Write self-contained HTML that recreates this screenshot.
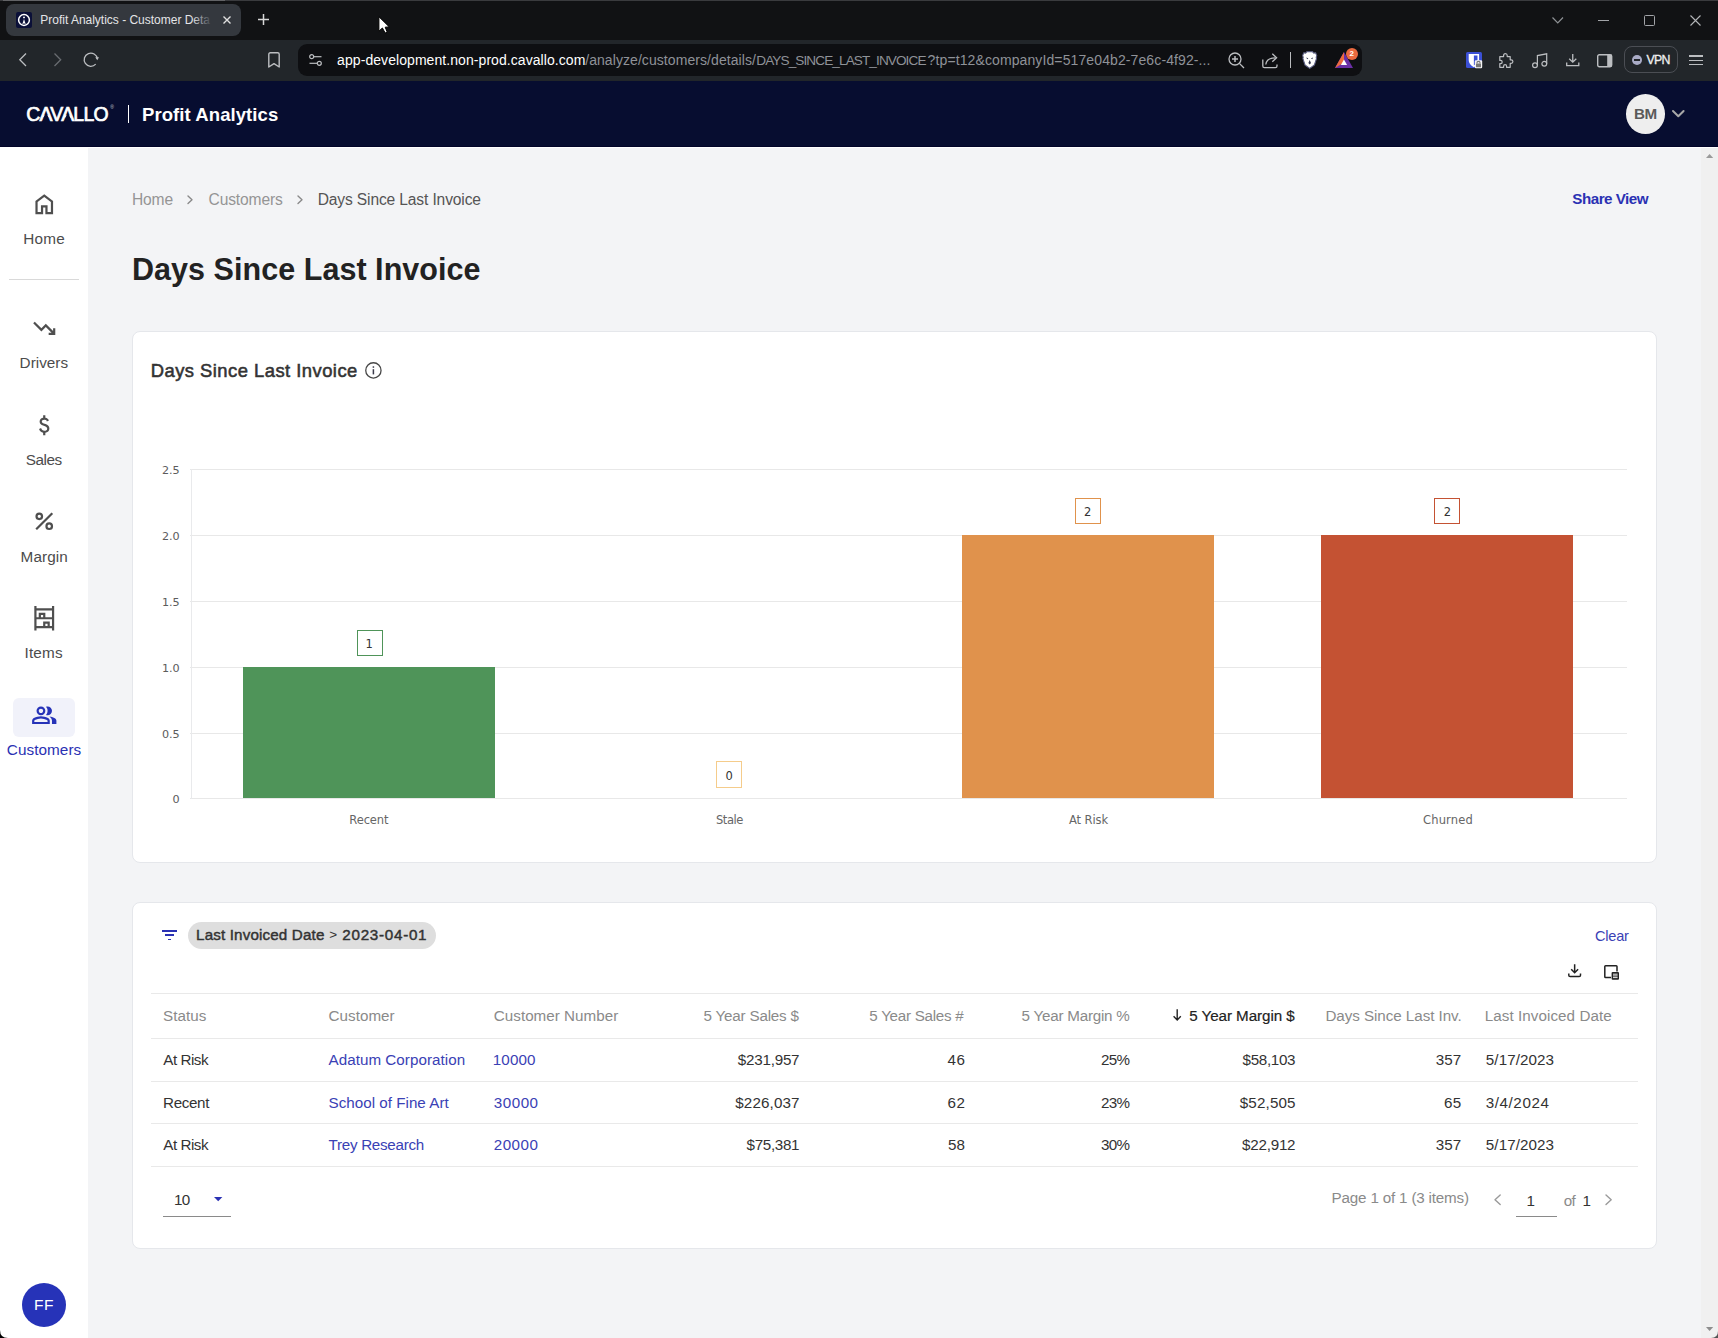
<!DOCTYPE html>
<html lang="en"><head><meta charset="utf-8"><title>Profit Analytics - Customer Details</title>
<style>
html,body{margin:0;padding:0}
body{width:1718px;height:1338px;position:relative;overflow:hidden;background:#f3f4f6;font-family:"Liberation Sans",sans-serif}
.t{position:absolute;white-space:pre;margin:0;padding:0}
.b{position:absolute;box-sizing:border-box}
svg{position:absolute;overflow:visible}
</style></head><body>
<div class="b" style="left:0px;top:0px;width:1718px;height:40px;background:#111214;"></div>
<div class="b" style="left:0px;top:0px;width:1718px;height:1px;background:#3a3b3e;"></div>
<div class="b" style="left:3px;top:0px;width:222px;height:1px;background:#626366;"></div>
<div class="b" style="left:0px;top:40px;width:1718px;height:41px;background:#22262a;"></div>
<div class="b" style="left:6px;top:4px;width:235px;height:32px;background:#34383e;border-radius:8px;"></div>
<div class="b" style="left:298px;top:44px;width:1064px;height:32px;background:#0e0f12;border-radius:9px;"></div>
<div class="b" style="left:0px;top:81px;width:1718px;height:66px;background:#070d30;"></div>
<div class="b" style="left:0px;top:146px;width:1718px;height:1px;background:#020428;"></div>
<div class="b" style="left:88px;top:147px;width:1630px;height:1px;background:#ffffff;z-index:1;"></div>
<div class="b" style="left:128px;top:105px;width:1px;height:18px;background:#ffffff;"></div>
<div class="b" style="left:1625.7px;top:94px;width:39.4px;height:40px;background:#eeeeee;border-radius:50%;"></div>
<div class="b" style="left:0px;top:147px;width:88px;height:1191px;background:#ffffff;"></div>
<div class="b" style="left:9px;top:279px;width:70px;height:1px;background:#d9d9d9;"></div>
<div class="b" style="left:13px;top:698px;width:62px;height:39px;background:#f1f2fa;border-radius:6px;"></div>
<div class="b" style="left:22px;top:1283px;width:44px;height:44px;background:#2633b8;border-radius:50%;"></div>
<div class="b" style="left:1701px;top:147px;width:17px;height:1191px;background:#f0f0f0;"></div>
<div class="b" style="left:132px;top:331px;width:1525px;height:532px;background:#ffffff;border:1px solid #e5e7eb;border-radius:8px;"></div>
<div class="b" style="left:132px;top:902px;width:1525px;height:347px;background:#ffffff;border:1px solid #e5e7eb;border-radius:8px;"></div>
<div class="b" style="left:190px;top:469px;width:1437px;height:1px;background:#e8e8e8;"></div>
<div class="b" style="left:190px;top:535px;width:1437px;height:1px;background:#e8e8e8;"></div>
<div class="b" style="left:190px;top:601px;width:1437px;height:1px;background:#e8e8e8;"></div>
<div class="b" style="left:190px;top:667px;width:1437px;height:1px;background:#e8e8e8;"></div>
<div class="b" style="left:190px;top:733px;width:1437px;height:1px;background:#e8e8e8;"></div>
<div class="b" style="left:190px;top:798px;width:1437px;height:1px;background:#e8e8e8;"></div>
<div class="b" style="left:190.5px;top:469px;width:1px;height:330px;background:#e9eaec;"></div>
<div class="b" style="left:243.3px;top:666.8px;width:252.1px;height:130.9px;background:#4f9459;"></div>
<div class="b" style="left:961.7px;top:534.7px;width:252px;height:263px;background:#e0924c;"></div>
<div class="b" style="left:1321.4px;top:534.7px;width:251.9px;height:263px;background:#c45233;"></div>
<div class="b" style="left:356.6px;top:629.6px;width:26px;height:26.5px;background:#ffffff;border:1px solid #4f9459;"></div>
<div class="b" style="left:716px;top:761.3px;width:26px;height:26.5px;background:#ffffff;border:1px solid #f5cc8b;"></div>
<div class="b" style="left:1074.6px;top:497.5px;width:26px;height:26.5px;background:#ffffff;border:1px solid #e0924c;"></div>
<div class="b" style="left:1434.3px;top:497.5px;width:26px;height:26.5px;background:#ffffff;border:1px solid #c45233;"></div>
<div class="b" style="left:151px;top:993px;width:1487px;height:1px;background:#e9e9e9;"></div>
<div class="b" style="left:151px;top:1038px;width:1487px;height:1px;background:#e9e9e9;"></div>
<div class="b" style="left:151px;top:1081px;width:1487px;height:1px;background:#e9e9e9;"></div>
<div class="b" style="left:151px;top:1123px;width:1487px;height:1px;background:#e9e9e9;"></div>
<div class="b" style="left:151px;top:1166px;width:1487px;height:1px;background:#e9e9e9;"></div>
<div class="b" style="left:188px;top:922px;width:248px;height:27px;background:#dedede;border-radius:14px;"></div>
<div class="b" style="left:163px;top:1216px;width:68px;height:1px;background:#8a8a8a;"></div>
<div class="b" style="left:1516px;top:1216px;width:41px;height:1px;background:#8a8a8a;"></div>
<svg style="left:30.75px;top:190.7px;" width="26.5" height="26.5" viewBox="0 0 24 24"><path d="M6 19h3v-6h6v6h3v-9l-6-4.5L6 10v9Zm-2 2V9l8-6 8 6v12h-7v-6h-2v6H4Z" fill="#4f4f4f"/></svg>
<svg style="left:30.75px;top:315px;" width="26.5" height="26.5" viewBox="0 0 24 24"><path d="M16 18v-2h2.6l-5.2-5.15-4 4L2 7.4 3.4 6l6 6 4-4 6.6 6.6V12h2v6h-6Z" fill="#4f4f4f"/></svg>
<svg style="left:30.75px;top:411.6px;" width="26.5" height="26.5" viewBox="0 0 24 24"><path d="M11 21v-2.15q-1.325-.3-2.287-1.15Q7.75 16.85 7.3 15.3l1.85-.75q.375 1.2 1.113 1.825.737.625 1.937.625 1.025 0 1.738-.463.712-.462.712-1.437 0-.875-.55-1.388-.55-.512-2.55-1.162-2.15-.675-2.95-1.612-.8-.938-.8-2.288 0-1.625 1.05-2.525Q9.9 5.225 11 5.1V3h2v2.1q1.25.2 2.063.912.812.713 1.187 1.738l-1.85.8q-.3-.8-.85-1.2-.55-.4-1.5-.4-1.1 0-1.675.487-.575.488-.575 1.213 0 .825.75 1.3.75.475 2.6 1 1.725.5 2.612 1.587.888 1.088.888 2.513 0 1.775-1.05 2.7-1.05.925-2.6 1.15V21h-2Z" fill="#4f4f4f"/></svg>
<svg style="left:30.75px;top:508.1px;" width="26.5" height="26.5" viewBox="0 0 24 24"><g fill="none" stroke="#4f4f4f" stroke-width="2"><circle cx="7.5" cy="7.5" r="2.5"/><circle cx="16.5" cy="16.5" r="2.5"/><path d="M4.7 19.3L19.3 4.7"/></g></svg>
<svg style="left:30.75px;top:604.7px;" width="26.5" height="26.5" viewBox="0 0 24 24"><path d="M3 23V1h2v2h14V1h2v22h-2v-2H5v2H3Zm2-12h2V7h6v4h6V5H5v6Zm0 8h6v-4h6v4h2v-6H5v6Zm4-8h2V9H9v2Zm4 8h2v-2h-2v2Z" fill="#4f4f4f"/></svg>
<svg style="left:30.75px;top:701.6px;" width="26.5" height="26.5" viewBox="0 0 24 24"><path d="M1 20v-2.8q0-.85.438-1.563.437-.712 1.162-1.087 1.55-.775 3.15-1.163Q7.35 13 9 13t3.25.387q1.6.388 3.15 1.163.725.375 1.162 1.087Q17 16.35 17 17.2V20H1Zm18 0v-3q0-1.1-.612-2.113-.613-1.012-1.738-1.737 1.275.15 2.4.512 1.125.363 2.1.888.9.5 1.375 1.112Q23 16.275 23 17v3h-4ZM9 12q-1.65 0-2.825-1.175Q5 9.65 5 8q0-1.65 1.175-2.825Q7.35 4 9 4q1.65 0 2.825 1.175Q13 6.35 13 8q0 1.65-1.175 2.825Q10.65 12 9 12Zm10-4q0 1.65-1.175 2.825Q16.65 12 15 12q-.275 0-.7-.063-.425-.062-.7-.137.675-.8 1.037-1.775Q15 9.05 15 8q0-1.05-.363-2.025Q14.275 5 13.6 4.2q.35-.125.7-.163Q14.65 4 15 4q1.65 0 2.825 1.175Q19 6.35 19 8ZM3 18h12v-.8q0-.275-.137-.5-.138-.225-.363-.35-1.35-.675-2.725-1.013Q10.4 15 9 15t-2.775.337Q4.85 15.675 3.5 16.35q-.225.125-.362.35-.138.225-.138.5v.8Zm6-8q.825 0 1.413-.588Q11 8.825 11 8t-.587-1.413Q9.825 6 9 6q-.825 0-1.412.587Q7 7.175 7 8q0 .825.588 1.412Q8.175 10 9 10Z" fill="#2633b8"/></svg>
<svg style="left:188.3px;top:196.2px;" width="4" height="7.6" viewBox="0 0 4 7.6"><path d="M0 0L4 3.8L0 7.6" fill="none" stroke="#8a8a8a" stroke-width="1.4" stroke-linecap="round" stroke-linejoin="round"/></svg>
<svg style="left:297.8px;top:196.2px;" width="4" height="7.6" viewBox="0 0 4 7.6"><path d="M0 0L4 3.8L0 7.6" fill="none" stroke="#8a8a8a" stroke-width="1.4" stroke-linecap="round" stroke-linejoin="round"/></svg>
<svg style="left:1672.4px;top:110.4px;" width="12.6" height="7.6" viewBox="0 0 12.6 7.6"><path d="M1 1L6.3 6.3L11.6 1" fill="none" stroke="#a8a8a8" stroke-width="2" stroke-linecap="round" stroke-linejoin="round"/></svg>
<svg style="left:365px;top:361.65px;" width="16.8" height="16.8" viewBox="0 0 16.8 16.8"><circle cx="8.4" cy="8.4" r="7.65" fill="none" stroke="#484848" stroke-width="1.3"/><rect x="7.65" y="7.2" width="1.5" height="5.2" fill="#3a3a4a"/><rect x="7.65" y="4.3" width="1.5" height="1.5" fill="#3a3a4a"/></svg>
<div class="b" style="left:162px;top:930.3px;width:15px;height:1.7px;background:#2a31b3;"></div>
<div class="b" style="left:164.8px;top:934.4px;width:9.4px;height:1.7px;background:#2a31b3;"></div>
<div class="b" style="left:167.8px;top:938.5px;width:3.4px;height:1.7px;background:#2a31b3;"></div>
<svg style="left:1567.6px;top:964.4px;" width="14" height="14" viewBox="0 0 14 14"><g fill="none" stroke="#222" stroke-width="1.5"><path d="M6.65 0.2V8.6M3.2 5.3L6.65 8.8L10.1 5.3"/><path d="M0.8 9.6V11.3Q0.8 12.6 2.1 12.6H11.2Q12.5 12.6 12.5 11.3V9.6"/></g></svg>
<svg style="left:1604.4px;top:965px;" width="16" height="15" viewBox="0 0 16 15"><g fill="none" stroke="#222" stroke-width="1.5"><path d="M7 12.6H1.6Q0.8 12.6 0.8 11.8V1.6Q0.8 0.8 1.6 0.8H12.2Q13 0.8 13 1.6V6.5"/></g><rect x="7.6" y="6.9" width="7.4" height="7.9" rx="1.1" fill="#222"/><path d="M9 9.2h4.6M9 10.9h4.6M9 12.6h4.6" stroke="#fff" stroke-width="0.9"/></svg>
<svg style="left:1172.9px;top:1008.8px;" width="8.4" height="11.8" viewBox="0 0 8.4 11.8"><path d="M4.2 0.3V10.8M0.6 7.3L4.2 11L7.8 7.3" fill="none" stroke="#222" stroke-width="1.4"/></svg>
<svg style="left:214px;top:1197px;" width="8.4" height="4.2" viewBox="0 0 8.4 4.2"><path d="M0 0H8.4L4.2 4.2Z" fill="#2a31b3"/></svg>
<svg style="left:1494.6px;top:1195px;" width="5.2" height="9.6" viewBox="0 0 5.2 9.6"><path d="M5.2 0L0 4.8L5.2 9.6" fill="none" stroke="#9a9a9a" stroke-width="1.4" stroke-linecap="round" stroke-linejoin="round"/></svg>
<svg style="left:1606.2px;top:1195px;" width="5.2" height="9.6" viewBox="0 0 5.2 9.6"><path d="M0 0L5.2 4.8L0 9.6" fill="none" stroke="#9a9a9a" stroke-width="1.4" stroke-linecap="round" stroke-linejoin="round"/></svg>
<svg style="left:1706px;top:154px;" width="7.2" height="4" viewBox="0 0 7.2 4"><path d="M0 4H7.2L3.6 0Z" fill="#9a9a9a"/></svg>
<svg style="left:1705.9px;top:1327px;" width="7.2" height="4" viewBox="0 0 7.2 4"><path d="M0 0H7.2L3.6 4Z" fill="#8e8e8e"/></svg>
<svg style="left:1711px;top:1331px;" width="7" height="7" viewBox="0 0 7 7"><path d="M7 0Q7 7 0 7H7Z" fill="#555"/></svg>
<div class="b" style="left:16px;top:12px;width:16px;height:16px;background:#0b1038;border-radius:2px;"></div>
<svg style="left:16px;top:12px;" width="16" height="16" viewBox="0 0 16 16"><circle cx="8" cy="8" r="5.4" fill="none" stroke="#fff" stroke-width="1.5"/><circle cx="8" cy="5.4" r="0.95" fill="#fff"/><path d="M8 7.1L9.7 12.2L8 11.2L6.3 12.2Z" fill="#fff"/></svg>
<div class="b" style="left:192px;top:8px;width:24px;height:24px;z-index:3;background:linear-gradient(90deg,rgba(52,56,62,0),#34383e 85%);"></div>
<svg style="left:223px;top:16px;" width="8" height="8" viewBox="0 0 8 8"><path d="M0.5 0.5L7.5 7.5M7.5 0.5L0.5 7.5" stroke="#e0e0e0" stroke-width="1.4"/></svg>
<svg style="left:258px;top:14.3px;" width="11" height="11" viewBox="0 0 11 11"><path d="M5.5 0V11M0 5.5H11" stroke="#d8d8d8" stroke-width="1.5"/></svg>
<svg style="left:378px;top:16px;z-index:5;" width="13" height="19" viewBox="0 0 13 19"><path d="M0.9 0.7L0.9 15.2L4.4 12L7.2 17L9.3 16.3L7.2 11.2L11.3 10.9Z" fill="#fff" stroke="#000" stroke-width="1" stroke-linejoin="round"/></svg>
<svg style="left:1551.7px;top:16.5px;" width="11.5" height="6.5" viewBox="0 0 11.5 6.5"><path d="M0.5 0.5L5.75 5.8L11 0.5" fill="none" stroke="#8f9296" stroke-width="1.2"/></svg>
<div class="b" style="left:1598px;top:19.5px;width:10.5px;height:1px;background:#a2a4a8;"></div>
<div class="b" style="left:1644px;top:15px;width:10.5px;height:10.5px;border:1px solid #a2a4a8;border-radius:1.5px;"></div>
<svg style="left:1689.5px;top:14.5px;" width="11" height="11" viewBox="0 0 11 11"><path d="M0.5 0.5L10.5 10.5M10.5 0.5L0.5 10.5" stroke="#b4b6b9" stroke-width="1.1"/></svg>
<svg style="left:19px;top:52.7px;" width="7.5" height="13.5" viewBox="0 0 7.5 13.5"><path d="M7 0.5L0.8 6.75L7 13" fill="none" stroke="#bcbec1" stroke-width="1.3"/></svg>
<svg style="left:53.6px;top:52.7px;" width="7.5" height="13.5" viewBox="0 0 7.5 13.5"><path d="M0.5 0.5L6.7 6.75L0.5 13" fill="none" stroke="#696c71" stroke-width="1.3"/></svg>
<svg style="left:83px;top:52px;" width="16" height="16" viewBox="0 0 16 16"><path d="M14.34 6.78A6.6 6.6 0 1 0 12.7 12.12" fill="none" stroke="#bcbec1" stroke-width="1.3"/><path d="M12.3 5.2H16L14.3 8.2Z" fill="#bcbec1"/></svg>
<svg style="left:268.4px;top:52.3px;" width="12" height="16" viewBox="0 0 12 16"><path d="M0.8 15V2.3Q0.8 0.8 2.3 0.8H9.7Q11.2 0.8 11.2 2.3V15L6 11.6Z" fill="none" stroke="#bcbec1" stroke-width="1.4" stroke-linejoin="round"/></svg>
<svg style="left:309.3px;top:54px;" width="13" height="12" viewBox="0 0 13 12"><g fill="none" stroke="#bcbec1" stroke-width="1.2"><circle cx="2.7" cy="2.7" r="2"/><path d="M5 2.7H12.5"/><circle cx="10.3" cy="9.3" r="2"/><path d="M0.5 9.3H8"/></g></svg>
<svg style="left:1227.5px;top:52.3px;" width="17" height="17" viewBox="0 0 17 17"><g fill="none" stroke="#bcbec1" stroke-width="1.3"><circle cx="7" cy="7" r="6"/><path d="M11.4 11.4L16 16"/><path d="M7 4V10M4 7H10" stroke-width="1.5"/></g></svg>
<svg style="left:1262px;top:52.5px;" width="16" height="15.5" viewBox="0 0 16 15.5"><g fill="none" stroke="#bcbec1" stroke-width="1.3"><path d="M0.8 6.5V13Q0.8 14.6 2.4 14.6H13.4Q15 14.6 15 13V11.5"/><path d="M3.8 11.5Q4.6 4.8 13.6 4.8"/><path d="M10.3 0.8L14.6 4.8L10.3 8.8"/></g></svg>
<div class="b" style="left:1290px;top:52px;width:1px;height:16px;background:#b9bbbe;"></div>
<svg style="left:1302px;top:51px;" width="15.4" height="18" viewBox="0 0 15.4 18"><path d="M7.7 0.6L10.4 0.6L11.8 2.1L13.6 1.7L14.8 4.6L14.2 6.2L14.5 7.6L12.4 14L7.7 17.4L3 14L0.9 7.6L1.2 6.2L0.6 4.6L1.8 1.7L3.6 2.1L5 0.6Z" fill="#fff" stroke="#5a5d80" stroke-width="1.1" stroke-linejoin="round"/><path d="M4.2 6.4L6.4 7.2L5.2 8.3ZM11.2 6.4L9 7.2L10.2 8.3ZM7.7 9L9 12L7.7 13.4L6.4 12Z" fill="#33364f"/></svg>
<svg style="left:1335px;top:52px;" width="18" height="16" viewBox="0 0 18 16"><path d="M9 0L18 16H0Z" fill="#6a2fa5"/><path d="M9 0L0 16L9 10.6Z" fill="#ee6a3c"/><path d="M9 7.4L12.1 12.9H5.9Z" fill="#fff"/></svg>
<div class="b" style="left:1346px;top:48px;width:12px;height:12px;background:#ea6a40;border-radius:50%;"></div>
<div class="b" style="left:1466px;top:51.9px;width:16.2px;height:16.2px;background:#3b50d6;border-radius:1.5px;"></div>
<svg style="left:1466px;top:51.9px;" width="16.2" height="16.2" viewBox="0 0 16.2 16.2"><path d="M2.7 2H13.1V8Q13.1 12.6 7.9 15.2Q2.7 12.6 2.7 8Z" fill="#fff"/><path d="M7.9 3.6H11.5V8Q11.5 11.4 7.9 13.4Z" fill="#3b50d6"/><rect x="8.8" y="8.3" width="7.4" height="7.9" rx="1.2" fill="#f4f4f4"/><rect x="10" y="11.4" width="5" height="3.8" rx="0.5" fill="#777"/><path d="M11 11.4V10.5Q11 9.4 12.5 9.4Q14 9.4 14 10.5V11.4" fill="none" stroke="#777" stroke-width="1.1"/></svg>
<svg style="left:1498px;top:53px;" width="15.5" height="15" viewBox="0 0 15.5 15"><path d="M5.6 2.6Q5.6 0.7 7.4 0.7Q9.2 0.7 9.2 2.6V3.6H12.2V6.8H13.1Q14.9 6.8 14.9 8.6Q14.9 10.4 13.1 10.4H12.2V14.3H8.6V13.3Q8.6 11.7 7.1 11.7Q5.6 11.7 5.6 13.3V14.3H1.8V10.6H2.6Q4.2 10.6 4.2 9Q4.2 7.4 2.6 7.4H1.8V3.6H5.6Z" fill="none" stroke="#bcbec1" stroke-width="1.2" stroke-linejoin="round"/></svg>
<svg style="left:1531.5px;top:53px;" width="15.5" height="15.5" viewBox="0 0 15.5 15.5"><g fill="none" stroke="#bcbec1" stroke-width="1.2"><circle cx="3" cy="12.3" r="2.4"/><circle cx="12.3" cy="10.8" r="2.4"/><path d="M5.4 12.3V2.6L14.7 0.8V10.8"/></g></svg>
<svg style="left:1565.5px;top:54px;" width="13.5" height="12.5" viewBox="0 0 13.5 12.5"><g fill="none" stroke="#bcbec1" stroke-width="1.3"><path d="M6.75 0V8M3.2 4.8L6.75 8.2L10.3 4.8"/><path d="M0.7 8.6V11.6H12.8V8.6"/></g></svg>
<svg style="left:1597.4px;top:53.5px;" width="15.4" height="13.4" viewBox="0 0 15.4 13.4"><rect x="0.7" y="0.7" width="14" height="12" rx="1.6" fill="none" stroke="#bcbec1" stroke-width="1.4"/><rect x="10.2" y="0.7" width="4.5" height="12" fill="#bcbec1"/></svg>
<div class="b" style="left:1624.3px;top:46.2px;width:53.4px;height:27.2px;border:1px solid #4b4e54;border-radius:8px;"></div>
<div class="b" style="left:1632px;top:55px;width:10px;height:10px;background:#a9abc6;border-radius:50%;"></div>
<div class="b" style="left:1634.2px;top:59.2px;width:5.6px;height:1.6px;background:#22262a;"></div>
<div class="b" style="left:1689.3px;top:55.3px;width:13.4px;height:1.3px;background:#bcbec1;"></div>
<div class="b" style="left:1689.3px;top:59.7px;width:13.4px;height:1.3px;background:#bcbec1;"></div>
<div class="b" style="left:1689.3px;top:64.1px;width:13.4px;height:1.3px;background:#bcbec1;"></div>
<svg style="left:0px;top:1330px;" width="8" height="8" viewBox="0 0 8 8"><path d="M0 0Q0 8 8 8H0Z" fill="#000"/></svg>
<svg style="left:0;top:0;z-index:4" width="120" height="130" viewBox="0 0 120 130"><path d="M44.75 114.9L47.25 114.9L48.8 118.1L43.2 118.1Z M66.75 114.9L69.1 114.9L70.3 118.1L65.2 118.1Z" fill="#070d30"/></svg>
<div class="t" style="left:26.30px;top:104.98px;font:400 19.4px/19.4px 'Liberation Sans',sans-serif;color:#fff;letter-spacing:-0.715px;-webkit-text-stroke:0.7px #fff;">CAVALLO</div>
<div class="t" style="left:110.20px;top:105.37px;font:400 5px/5px 'Liberation Sans',sans-serif;color:#c8cad6;">®</div>
<div class="t" style="left:142.00px;top:105.84px;font:700 18.5px/18.5px 'Liberation Sans',sans-serif;color:#fff;letter-spacing:0.079px;">Profit Analytics</div>
<div class="t" style="left:1633.90px;top:105.93px;font:700 15.2px/15.2px 'Liberation Sans',sans-serif;color:#5a5a5a;letter-spacing:-0.368px;">BM</div>
<div class="t" style="left:23.30px;top:230.80px;font:400 15.3px/15.3px 'Liberation Sans',sans-serif;color:#4c4c4c;letter-spacing:0.201px;">Home</div>
<div class="t" style="left:19.60px;top:355.05px;font:400 15.3px/15.3px 'Liberation Sans',sans-serif;color:#4c4c4c;">Drivers</div>
<div class="t" style="left:25.80px;top:452.05px;font:400 15.3px/15.3px 'Liberation Sans',sans-serif;color:#4c4c4c;letter-spacing:-0.454px;">Sales</div>
<div class="t" style="left:20.60px;top:549.25px;font:400 15.3px/15.3px 'Liberation Sans',sans-serif;color:#4c4c4c;letter-spacing:0.070px;">Margin</div>
<div class="t" style="left:24.60px;top:645.05px;font:400 15.3px/15.3px 'Liberation Sans',sans-serif;color:#4c4c4c;letter-spacing:0.138px;">Items</div>
<div class="t" style="left:6.80px;top:742.05px;font:400 15.3px/15.3px 'Liberation Sans',sans-serif;color:#2a31b3;letter-spacing:0.062px;">Customers</div>
<div class="t" style="left:33.90px;top:1296.88px;font:400 15.5px/15.5px 'Liberation Sans',sans-serif;color:#fff;letter-spacing:0.632px;">FF</div>
<div class="t" style="left:132.00px;top:192.49px;font:400 15.6px/15.6px 'Liberation Sans',sans-serif;color:#959595;letter-spacing:-0.175px;">Home</div>
<div class="t" style="left:208.50px;top:192.49px;font:400 15.6px/15.6px 'Liberation Sans',sans-serif;color:#959595;letter-spacing:-0.136px;">Customers</div>
<div class="t" style="left:317.70px;top:192.49px;font:400 15.6px/15.6px 'Liberation Sans',sans-serif;color:#555;letter-spacing:-0.143px;">Days Since Last Invoice</div>
<div class="t" style="left:1572.30px;top:190.93px;font:700 15.2px/15.2px 'Liberation Sans',sans-serif;color:#2a31b3;letter-spacing:-0.506px;">Share View</div>
<div class="t" style="left:132.00px;top:254.18px;font:700 30.5px/30.5px 'Liberation Sans',sans-serif;color:#222;letter-spacing:0.043px;">Days Since Last Invoice</div>
<div class="t" style="left:150.70px;top:362.22px;font:400 18.4px/18.4px 'Liberation Sans',sans-serif;color:#333;letter-spacing:0.471px;-webkit-text-stroke:0.55px #333;">Days Since Last Invoice</div>
<div class="t" style="left:161.93px;top:464.72px;font:400 11.2px/11.2px 'DejaVu Sans',sans-serif;color:#5c5c5c;">2.5</div>
<div class="t" style="left:161.93px;top:530.72px;font:400 11.2px/11.2px 'DejaVu Sans',sans-serif;color:#5c5c5c;">2.0</div>
<div class="t" style="left:161.93px;top:596.72px;font:400 11.2px/11.2px 'DejaVu Sans',sans-serif;color:#5c5c5c;">1.5</div>
<div class="t" style="left:161.93px;top:662.72px;font:400 11.2px/11.2px 'DejaVu Sans',sans-serif;color:#5c5c5c;">1.0</div>
<div class="t" style="left:161.93px;top:728.72px;font:400 11.2px/11.2px 'DejaVu Sans',sans-serif;color:#5c5c5c;">0.5</div>
<div class="t" style="left:172.60px;top:793.72px;font:400 11.2px/11.2px 'DejaVu Sans',sans-serif;color:#5c5c5c;">0</div>
<div class="t" style="left:349.30px;top:815.07px;font:400 11.5px/11.5px 'DejaVu Sans',sans-serif;color:#666;letter-spacing:-0.107px;">Recent</div>
<div class="t" style="left:716.00px;top:815.07px;font:400 11.5px/11.5px 'DejaVu Sans',sans-serif;color:#666;letter-spacing:-0.463px;">Stale</div>
<div class="t" style="left:1069.00px;top:815.07px;font:400 11.5px/11.5px 'DejaVu Sans',sans-serif;color:#666;letter-spacing:-0.084px;">At Risk</div>
<div class="t" style="left:1423.00px;top:815.07px;font:400 11.5px/11.5px 'DejaVu Sans',sans-serif;color:#666;letter-spacing:0.167px;">Churned</div>
<div class="t" style="left:365.60px;top:639.27px;font:400 11.5px/11.5px 'DejaVu Sans',sans-serif;color:#333;">1</div>
<div class="t" style="left:725.50px;top:771.07px;font:400 11.5px/11.5px 'DejaVu Sans',sans-serif;color:#333;">0</div>
<div class="t" style="left:1084.10px;top:507.07px;font:400 11.5px/11.5px 'DejaVu Sans',sans-serif;color:#333;">2</div>
<div class="t" style="left:1443.80px;top:507.07px;font:400 11.5px/11.5px 'DejaVu Sans',sans-serif;color:#333;">2</div>
<div class="t" style="left:196.10px;top:926.93px;font:400 15.2px/15.2px 'Liberation Sans',sans-serif;color:#333;letter-spacing:0.144px;-webkit-text-stroke:0.45px #333;">Last Invoiced Date</div>
<div class="t" style="left:329.20px;top:928.37px;font:400 13.5px/13.5px 'Liberation Sans',sans-serif;color:#333;">&gt;</div>
<div class="t" style="left:342.30px;top:926.93px;font:400 15.2px/15.2px 'Liberation Sans',sans-serif;color:#333;letter-spacing:0.729px;-webkit-text-stroke:0.45px #333;">2023-04-01</div>
<div class="t" style="left:1594.90px;top:928.84px;font:400 14.6px/14.6px 'Liberation Sans',sans-serif;color:#3a41b5;letter-spacing:-0.204px;">Clear</div>
<div class="t" style="left:163.10px;top:1008.43px;font:400 15.2px/15.2px 'Liberation Sans',sans-serif;color:#8a8a8a;letter-spacing:0.048px;">Status</div>
<div class="t" style="left:328.50px;top:1008.43px;font:400 15.2px/15.2px 'Liberation Sans',sans-serif;color:#8a8a8a;letter-spacing:0.047px;">Customer</div>
<div class="t" style="left:493.80px;top:1008.43px;font:400 15.2px/15.2px 'Liberation Sans',sans-serif;color:#8a8a8a;letter-spacing:0.028px;">Customer Number</div>
<div class="t" style="left:703.50px;top:1008.43px;font:400 15.2px/15.2px 'Liberation Sans',sans-serif;color:#8a8a8a;letter-spacing:-0.191px;">5 Year Sales $</div>
<div class="t" style="left:869.30px;top:1008.43px;font:400 15.2px/15.2px 'Liberation Sans',sans-serif;color:#8a8a8a;letter-spacing:-0.268px;">5 Year Sales #</div>
<div class="t" style="left:1021.50px;top:1008.43px;font:400 15.2px/15.2px 'Liberation Sans',sans-serif;color:#8a8a8a;letter-spacing:-0.222px;">5 Year Margin %</div>
<div class="t" style="left:1189.20px;top:1008.43px;font:400 15.2px/15.2px 'Liberation Sans',sans-serif;color:#222;letter-spacing:-0.058px;-webkit-text-stroke:0.18px #222;">5 Year Margin $</div>
<div class="t" style="left:1325.40px;top:1008.43px;font:400 15.2px/15.2px 'Liberation Sans',sans-serif;color:#8a8a8a;letter-spacing:-0.052px;">Days Since Last Inv.</div>
<div class="t" style="left:1484.80px;top:1008.43px;font:400 15.2px/15.2px 'Liberation Sans',sans-serif;color:#8a8a8a;letter-spacing:0.062px;">Last Invoiced Date</div>
<div class="t" style="left:163.30px;top:1052.33px;font:400 15.2px/15.2px 'Liberation Sans',sans-serif;color:#333;letter-spacing:-0.467px;">At Risk</div>
<div class="t" style="left:328.50px;top:1052.33px;font:400 15.2px/15.2px 'Liberation Sans',sans-serif;color:#3a41b5;letter-spacing:0.043px;">Adatum Corporation</div>
<div class="t" style="left:492.80px;top:1052.33px;font:400 15.2px/15.2px 'Liberation Sans',sans-serif;color:#3a41b5;letter-spacing:0.103px;">10000</div>
<div class="t" style="left:737.80px;top:1052.33px;font:400 15.2px/15.2px 'Liberation Sans',sans-serif;color:#333;letter-spacing:-0.228px;">$231,957</div>
<div class="t" style="left:947.60px;top:1052.33px;font:400 15.2px/15.2px 'Liberation Sans',sans-serif;color:#333;letter-spacing:0.553px;">46</div>
<div class="t" style="left:1101.11px;top:1052.33px;font:400 15.2px/15.2px 'Liberation Sans',sans-serif;color:#333;letter-spacing:-0.700px;">25%</div>
<div class="t" style="left:1242.50px;top:1052.33px;font:400 15.2px/15.2px 'Liberation Sans',sans-serif;color:#333;letter-spacing:-0.309px;">$58,103</div>
<div class="t" style="left:1435.70px;top:1052.33px;font:400 15.2px/15.2px 'Liberation Sans',sans-serif;color:#333;letter-spacing:0.103px;">357</div>
<div class="t" style="left:1485.80px;top:1052.33px;font:400 15.2px/15.2px 'Liberation Sans',sans-serif;color:#333;letter-spacing:0.085px;">5/17/2023</div>
<div class="t" style="left:163.00px;top:1095.23px;font:400 15.2px/15.2px 'Liberation Sans',sans-serif;color:#333;letter-spacing:-0.340px;">Recent</div>
<div class="t" style="left:328.50px;top:1095.23px;font:400 15.2px/15.2px 'Liberation Sans',sans-serif;color:#3a41b5;letter-spacing:0.018px;">School of Fine Art</div>
<div class="t" style="left:493.80px;top:1095.23px;font:400 15.2px/15.2px 'Liberation Sans',sans-serif;color:#3a41b5;letter-spacing:0.503px;">30000</div>
<div class="t" style="left:735.30px;top:1095.23px;font:400 15.2px/15.2px 'Liberation Sans',sans-serif;color:#333;letter-spacing:0.129px;">$226,037</div>
<div class="t" style="left:947.60px;top:1095.23px;font:400 15.2px/15.2px 'Liberation Sans',sans-serif;color:#333;letter-spacing:0.553px;">62</div>
<div class="t" style="left:1101.11px;top:1095.23px;font:400 15.2px/15.2px 'Liberation Sans',sans-serif;color:#333;letter-spacing:-0.700px;">23%</div>
<div class="t" style="left:1239.70px;top:1095.23px;font:400 15.2px/15.2px 'Liberation Sans',sans-serif;color:#333;letter-spacing:0.158px;">$52,505</div>
<div class="t" style="left:1444.00px;top:1095.23px;font:400 15.2px/15.2px 'Liberation Sans',sans-serif;color:#333;letter-spacing:0.353px;">65</div>
<div class="t" style="left:1485.80px;top:1095.23px;font:400 15.2px/15.2px 'Liberation Sans',sans-serif;color:#333;letter-spacing:0.561px;">3/4/2024</div>
<div class="t" style="left:163.30px;top:1137.33px;font:400 15.2px/15.2px 'Liberation Sans',sans-serif;color:#333;letter-spacing:-0.467px;">At Risk</div>
<div class="t" style="left:328.50px;top:1137.33px;font:400 15.2px/15.2px 'Liberation Sans',sans-serif;color:#3a41b5;letter-spacing:-0.274px;">Trey Research</div>
<div class="t" style="left:493.80px;top:1137.33px;font:400 15.2px/15.2px 'Liberation Sans',sans-serif;color:#3a41b5;letter-spacing:0.453px;">20000</div>
<div class="t" style="left:746.60px;top:1137.33px;font:400 15.2px/15.2px 'Liberation Sans',sans-serif;color:#333;letter-spacing:-0.325px;">$75,381</div>
<div class="t" style="left:948.00px;top:1137.33px;font:400 15.2px/15.2px 'Liberation Sans',sans-serif;color:#333;letter-spacing:0.153px;">58</div>
<div class="t" style="left:1101.11px;top:1137.33px;font:400 15.2px/15.2px 'Liberation Sans',sans-serif;color:#333;letter-spacing:-0.700px;">30%</div>
<div class="t" style="left:1242.00px;top:1137.33px;font:400 15.2px/15.2px 'Liberation Sans',sans-serif;color:#333;letter-spacing:-0.225px;">$22,912</div>
<div class="t" style="left:1435.70px;top:1137.33px;font:400 15.2px/15.2px 'Liberation Sans',sans-serif;color:#333;letter-spacing:0.103px;">357</div>
<div class="t" style="left:1485.80px;top:1137.33px;font:400 15.2px/15.2px 'Liberation Sans',sans-serif;color:#333;letter-spacing:0.085px;">5/17/2023</div>
<div class="t" style="left:174.00px;top:1192.33px;font:400 15.2px/15.2px 'Liberation Sans',sans-serif;color:#333;letter-spacing:-0.700px;">10</div>
<div class="t" style="left:1331.60px;top:1190.43px;font:400 15.2px/15.2px 'Liberation Sans',sans-serif;color:#8a8a8a;letter-spacing:-0.176px;">Page 1 of 1 (3 items)</div>
<div class="t" style="left:1526.50px;top:1192.53px;font:400 15.2px/15.2px 'Liberation Sans',sans-serif;color:#333;">1</div>
<div class="t" style="left:1563.70px;top:1192.53px;font:400 15.2px/15.2px 'Liberation Sans',sans-serif;color:#8a8a8a;letter-spacing:-0.700px;">of</div>
<div class="t" style="left:1582.50px;top:1192.53px;font:400 15.2px/15.2px 'Liberation Sans',sans-serif;color:#333;">1</div>
<div class="t" style="left:40.30px;top:13.84px;font:400 12px/12px 'Liberation Sans',sans-serif;color:#e4e5e7;letter-spacing:-0.011px;">Profit Analytics - Customer Deta</div>
<div class="t" style="left:337.10px;top:53.25px;font:400 14px/14px 'Liberation Sans',sans-serif;color:#ffffff;letter-spacing:0.067px;">app-development.non-prod.cavallo.com</div>
<div class="t" style="left:585.20px;top:53.25px;font:400 14px/14px 'Liberation Sans',sans-serif;color:#8f9298;letter-spacing:0.071px;">/analyze/customers/details/</div>
<div class="t" style="left:756.30px;top:53.59px;font:400 13.6px/13.6px 'Liberation Sans',sans-serif;color:#8f9298;letter-spacing:-0.907px;">DAYS_SINCE_LAST_INVOICE</div>
<div class="t" style="left:927.60px;top:53.25px;font:400 14px/14px 'Liberation Sans',sans-serif;color:#8f9298;letter-spacing:0.109px;">?tp=t12&amp;companyId=517e04b2-7e6c-4f92-...</div>
<div class="t" style="left:1349.50px;top:50.23px;font:700 8px/8px 'Liberation Sans',sans-serif;color:#fff;">2</div>
<div class="t" style="left:1646.40px;top:53.89px;font:400 12.3px/12.3px 'Liberation Sans',sans-serif;color:#f0f0f0;letter-spacing:-0.700px;-webkit-text-stroke:0.3px #f0f0f0;">VPN</div>
</body></html>
